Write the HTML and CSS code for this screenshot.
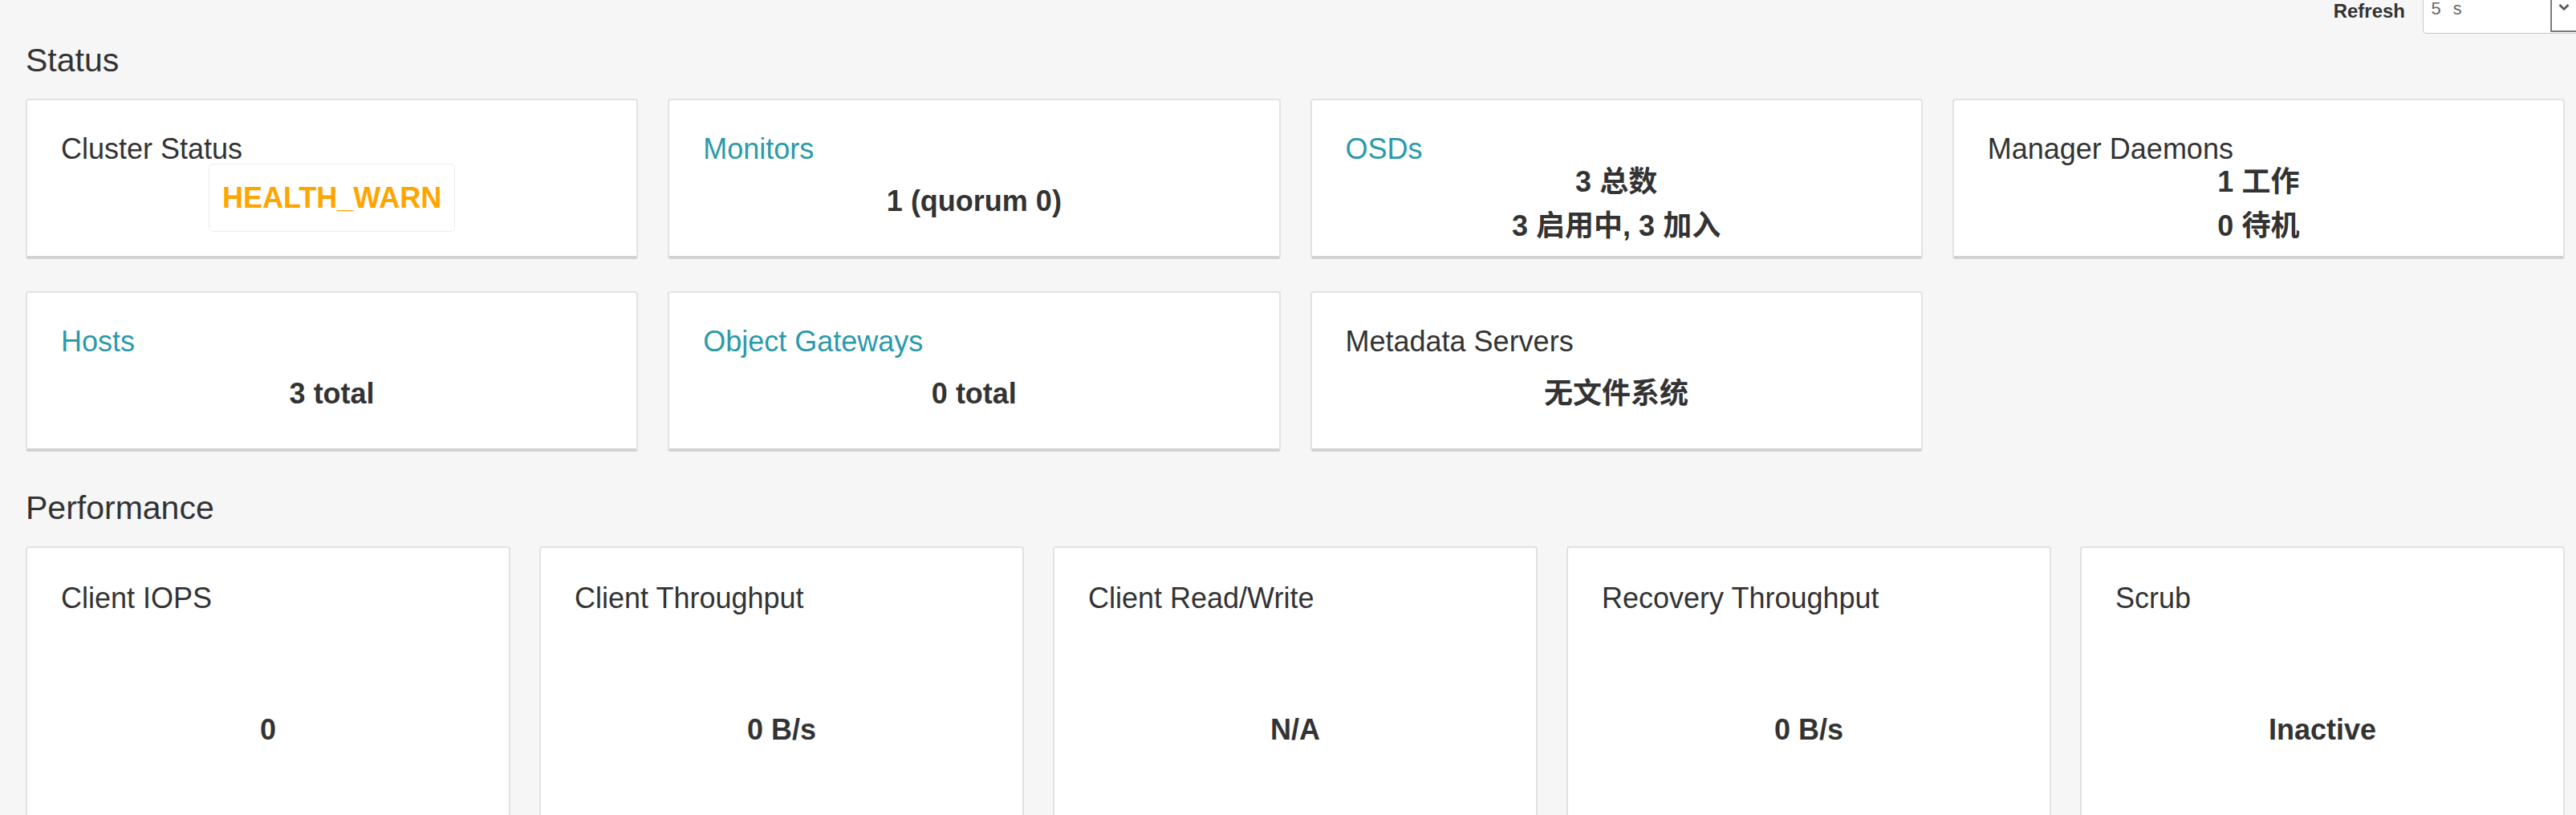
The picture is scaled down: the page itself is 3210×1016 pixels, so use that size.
FILE: index.html
```html
<!DOCTYPE html>
<html lang="zh-CN">
<head>
<meta charset="utf-8">
<title>Dashboard</title>
<link rel="stylesheet" href="styles.css">
</head>
<body>
<div class="page">
  <div class="toolbar">
    <span class="refresh-label">Refresh</span>
    <div class="select">
      <span class="select-value">5 s</span>
      <span class="select-arrow">
        <svg width="14" height="10" viewBox="0 0 14 10"><path d="M1.5 2 L7 7.5 L12.5 2" fill="none" stroke="#555" stroke-width="2.6"/></svg>
      </span>
    </div>
  </div>

  <h2 class="section-title">Status</h2>
  <div class="grid grid-4">
    <div class="card">
      <div class="card-title">Cluster Status</div>
      <div class="card-body">
        <span class="health-badge">HEALTH_WARN</span>
      </div>
    </div>
    <div class="card">
      <div class="card-title link">Monitors</div>
      <div class="card-body"><div class="value">1 (quorum 0)</div></div>
    </div>
    <div class="card">
      <div class="card-title link">OSDs</div>
      <div class="card-body two-line">
        <div class="value">3 总数</div>
        <div class="value">3 启用中, 3 加入</div>
      </div>
    </div>
    <div class="card">
      <div class="card-title">Manager Daemons</div>
      <div class="card-body two-line">
        <div class="value">1 工作</div>
        <div class="value">0 待机</div>
      </div>
    </div>
    <div class="card">
      <div class="card-title link">Hosts</div>
      <div class="card-body"><div class="value">3 total</div></div>
    </div>
    <div class="card">
      <div class="card-title link">Object Gateways</div>
      <div class="card-body"><div class="value">0 total</div></div>
    </div>
    <div class="card">
      <div class="card-title">Metadata Servers</div>
      <div class="card-body"><div class="value">无文件系统</div></div>
    </div>
  </div>

  <h2 class="section-title perf-title">Performance</h2>
  <div class="grid grid-5">
    <div class="card card-tall">
      <div class="card-title">Client IOPS</div>
      <div class="card-body"><div class="value">0</div></div>
    </div>
    <div class="card card-tall">
      <div class="card-title">Client Throughput</div>
      <div class="card-body"><div class="value">0 B/s</div></div>
    </div>
    <div class="card card-tall">
      <div class="card-title">Client Read/Write</div>
      <div class="card-body"><div class="value">N/A</div></div>
    </div>
    <div class="card card-tall">
      <div class="card-title">Recovery Throughput</div>
      <div class="card-body"><div class="value">0 B/s</div></div>
    </div>
    <div class="card card-tall">
      <div class="card-title">Scrub</div>
      <div class="card-body"><div class="value">Inactive</div></div>
    </div>
  </div>
</div>
</body>
</html>
```

FILE: styles.css
```css
* {
  box-sizing: border-box;
}

html, body {
  margin: 0;
  padding: 0;
  background: #f6f6f6;
}

body {
  font-family: "Liberation Sans", Arial, "Noto Sans CJK SC", sans-serif;
  color: #333;
  overflow: hidden;
}

.page {
  padding: 0 14px 0 32px;
}

/* top toolbar */
.toolbar {
  display: flex;
  justify-content: flex-end;
  align-items: flex-start;
  height: 42px;
  margin-right: -14px;
}

.refresh-label {
  font-weight: bold;
  font-size: 24px;
  line-height: 28px;
  color: #333;
  margin-right: 22px;
}

.select {
  display: flex;
  width: 191px;
  height: 42px;
  background: #fff;
  border: 1px solid #c8c8c8;
  border-top: none;
  border-right: none;
  border-radius: 0 0 0 5px;
}

.select-value {
  flex: 1;
  padding-left: 9px;
  font-family: "Liberation Mono", "DejaVu Sans Mono", monospace;
  font-size: 22px;
  line-height: 26px;
  color: #666;
}

.select-arrow {
  width: 32px;
  height: 40px;
  border-left: 2px solid #7a7a7a;
  border-bottom: 2px solid #7a7a7a;
  display: flex;
  justify-content: center;
  padding-top: 4px;
}

.select-arrow svg {
  display: block;
}

/* section headings */
.section-title {
  margin: 10px 0 25px 0;
  font-size: 41px;
  line-height: 46px;
  font-weight: normal;
  color: #333;
}

.perf-title {
  margin-top: 47px;
}

/* grids */
.grid {
  display: grid;
  column-gap: 37px;
  row-gap: 40px;
}

.grid-4 {
  grid-template-columns: repeat(4, 1fr);
}

.grid-5 {
  grid-template-columns: repeat(5, 1fr);
  column-gap: 36px;
}

/* cards */
.card {
  height: 200px;
  background: #fff;
  border: 2px solid #e2e2e2;
  border-bottom: 4px solid #d2d2d2;
  border-radius: 4px;
  padding: 41px 20px 25px 42px;
  display: flex;
  flex-direction: column;
}

.card-tall {
  height: 400px;
  padding-top: 43px;
}

.card-title {
  font-size: 36px;
  line-height: 40px;
  color: #333;
  white-space: nowrap;
}

.card-title.link {
  color: #2b9aab;
}

.card-body {
  flex: 1;
  min-height: 0;
  display: flex;
  flex-direction: column;
  justify-content: center;
  align-items: center;
  margin-left: -22px;
}

.card-body.two-line {
  padding-top: 8px;
}

.value {
  font-size: 36px;
  line-height: 55px;
  font-weight: bold;
  color: #333;
  white-space: nowrap;
  font-family: "Liberation Sans", Arial, "Noto Sans CJK SC", sans-serif;
}

.health-badge {
  display: inline-block;
  font-size: 36px;
  line-height: 55px;
  font-weight: bold;
  color: #ffa500;
  padding: 14px 16px;
  border: 1px solid #ececec;
  border-radius: 6px;
  margin-bottom: 8px;
}
```
